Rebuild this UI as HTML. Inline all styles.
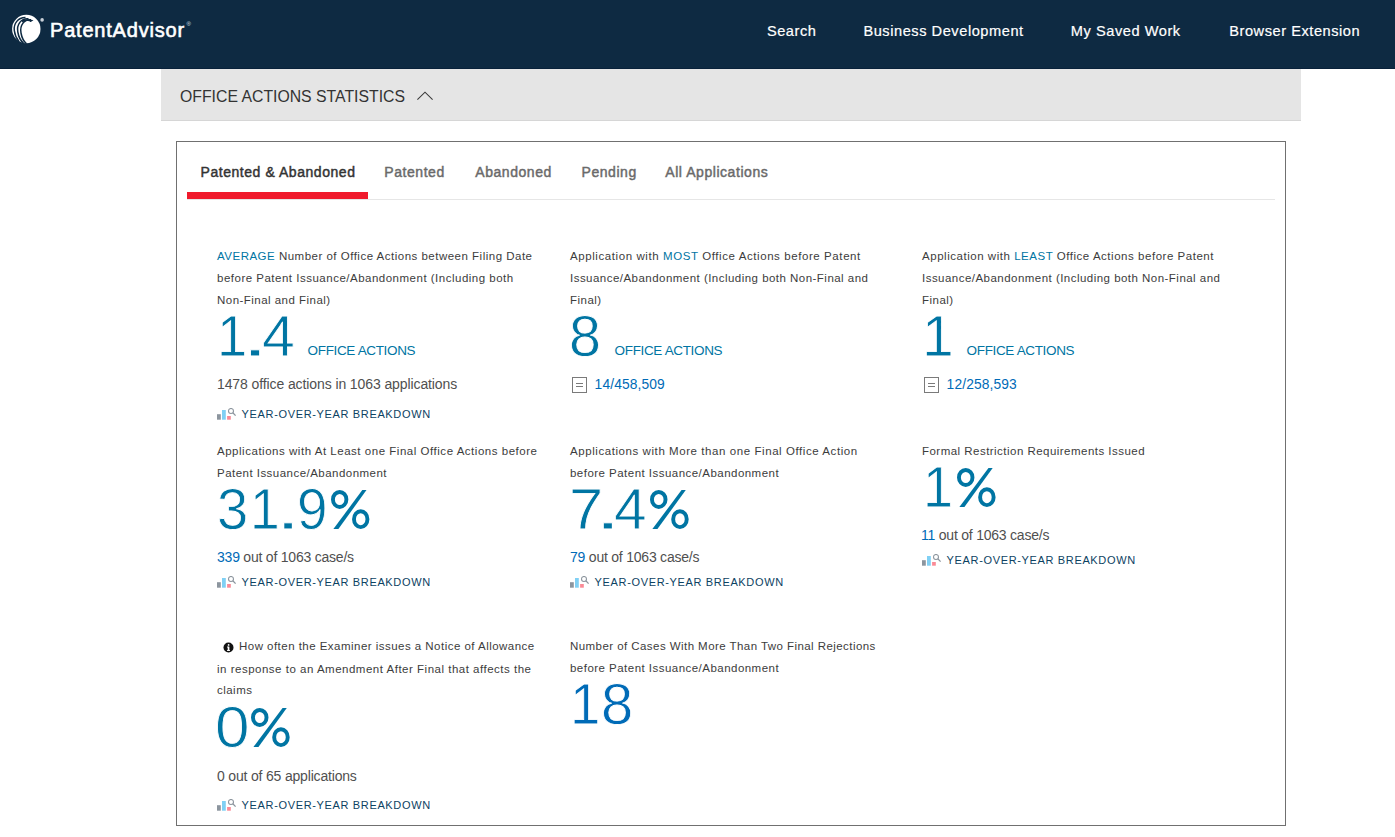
<!DOCTYPE html>
<html><head><meta charset="utf-8"><style>
html,body{margin:0;padding:0;}
body{width:1395px;height:837px;overflow:hidden;background:#fff;position:relative;font-family:"Liberation Sans",sans-serif;}
.t{position:absolute;white-space:nowrap;}
</style></head><body>
<div style="position:absolute;left:0;top:0;width:1395px;height:68px;background:#0e2a42"></div><div style="position:absolute;left:0;top:68px;width:1395px;height:1px;background:#08213a"></div><svg style="position:absolute;left:0;top:0" width="60" height="60" viewBox="0 0 60 60">
<circle cx="26.3" cy="29" r="14.2" fill="#fff"/>
<g fill="none" stroke="#0e2a42" stroke-width="1.5">
<path d="M31 19.8 C 24.5 19, 19.5 25, 21 33 C 21.8 37.5, 23.8 41.5, 26.5 43.8"/>
<path d="M28.5 18.8 C 21 18.2, 16.5 24.5, 17.8 32 C 18.6 37, 21 41, 23.5 43.3"/>
<path d="M25.5 17.6 C 18 17.5, 13.5 23.5, 14.3 30.5 C 14.8 35, 16.5 38.5, 19 41.8"/>
</g>
<path d="M21.5 20.5 C 25 18.8, 29 18.8, 33.5 20.2 L 31.5 21.5 C 28 20.6, 25 20.8, 22.5 22.5 Z" fill="#0e2a42"/>
<circle cx="30.5" cy="21.3" r="0.8" fill="#0e2a42"/>
<circle cx="42.1" cy="19.9" r="1.8" fill="#c9d0d8"/>
</svg><div class="t" style="left:50px;top:18.87px;font-size:20px;line-height:23px;color:#fff;font-weight:normal;letter-spacing:0.8px;-webkit-text-stroke:0.6px #fff;">PatentAdvisor</div>
<div class="t" style="left:186.5px;top:20.92px;font-size:6px;line-height:7px;color:#dfe3e8;font-weight:normal;letter-spacing:0px;">&reg;</div>
<div class="t" style="left:766.9px;top:22.94px;font-size:14.6px;line-height:17px;color:#fff;font-weight:normal;letter-spacing:0.55px;-webkit-text-stroke:0.2px #fff;">Search</div>
<div class="t" style="left:863.4px;top:22.94px;font-size:14.6px;line-height:17px;color:#fff;font-weight:normal;letter-spacing:0.55px;-webkit-text-stroke:0.2px #fff;">Business Development</div>
<div class="t" style="left:1070.8000000000002px;top:22.94px;font-size:14.6px;line-height:17px;color:#fff;font-weight:normal;letter-spacing:0.55px;-webkit-text-stroke:0.2px #fff;">My Saved Work</div>
<div class="t" style="left:1229.2px;top:22.94px;font-size:14.6px;line-height:17px;color:#fff;font-weight:normal;letter-spacing:0.55px;-webkit-text-stroke:0.2px #fff;">Browser Extension</div>
<div style="position:absolute;left:161px;top:69px;width:1140px;height:51px;background:#e5e5e5;border-bottom:1px solid #d6d6d6"></div><div class="t" style="left:180px;top:88.33px;font-size:15.8px;line-height:18px;color:#333;font-weight:normal;letter-spacing:0px;">OFFICE ACTIONS STATISTICS</div>
<svg style="position:absolute;left:415px;top:88px" width="20" height="16" viewBox="0 0 20 16"><path d="M2.4 11.6 L10 4.2 L17.6 11.6" fill="none" stroke="#3a3a3a" stroke-width="1.1"/></svg><div style="position:absolute;left:176px;top:141px;width:1108px;height:683px;border:1px solid #707070"></div><div class="t" style="left:200.5px;top:164.15px;font-size:14px;line-height:16px;color:#333;font-weight:normal;letter-spacing:0.55px;-webkit-text-stroke:0.45px #333;">Patented &amp; Abandoned</div>
<div class="t" style="left:384.3px;top:164.15px;font-size:14px;line-height:16px;color:#6a6a6a;font-weight:normal;letter-spacing:0.55px;-webkit-text-stroke:0.45px #6a6a6a;">Patented</div>
<div class="t" style="left:475.3px;top:164.15px;font-size:14px;line-height:16px;color:#6a6a6a;font-weight:normal;letter-spacing:0.55px;-webkit-text-stroke:0.45px #6a6a6a;">Abandoned</div>
<div class="t" style="left:581.5px;top:164.15px;font-size:14px;line-height:16px;color:#6a6a6a;font-weight:normal;letter-spacing:0.55px;-webkit-text-stroke:0.45px #6a6a6a;">Pending</div>
<div class="t" style="left:665.3000000000001px;top:164.15px;font-size:14px;line-height:16px;color:#6a6a6a;font-weight:normal;letter-spacing:0.55px;-webkit-text-stroke:0.45px #6a6a6a;">All Applications</div>
<div style="position:absolute;left:187px;top:199px;width:1088px;height:1px;background:#e6e6e6"></div><div style="position:absolute;left:187px;top:192px;width:181px;height:7px;background:#f01a2c"></div><div class="t" style="left:217px;top:249.52px;font-size:11.5px;line-height:13px;color:#3c3c3c;font-weight:normal;letter-spacing:0.495px;"><span style="color:#0075a3">AVERAGE</span> Number of Office Actions between Filing Date</div>
<div class="t" style="left:217px;top:271.52px;font-size:11.5px;line-height:13px;color:#3c3c3c;font-weight:normal;letter-spacing:0.5px;">before Patent Issuance/Abandonment (Including both</div>
<div class="t" style="left:217px;top:293.52px;font-size:11.5px;line-height:13px;color:#3c3c3c;font-weight:normal;letter-spacing:0.47px;">Non-Final and Final)</div>
<div class="t" style="left:570px;top:249.52px;font-size:11.5px;line-height:13px;color:#3c3c3c;font-weight:normal;letter-spacing:0.584px;">Application with <span style="color:#0075a3">MOST</span> Office Actions before Patent</div>
<div class="t" style="left:570px;top:271.52px;font-size:11.5px;line-height:13px;color:#3c3c3c;font-weight:normal;letter-spacing:0.47px;">Issuance/Abandonment (Including both Non-Final and</div>
<div class="t" style="left:570px;top:293.52px;font-size:11.5px;line-height:13px;color:#3c3c3c;font-weight:normal;letter-spacing:0.47px;">Final)</div>
<div class="t" style="left:922px;top:249.52px;font-size:11.5px;line-height:13px;color:#3c3c3c;font-weight:normal;letter-spacing:0.532px;">Application with <span style="color:#0075a3">LEAST</span> Office Actions before Patent</div>
<div class="t" style="left:922px;top:271.52px;font-size:11.5px;line-height:13px;color:#3c3c3c;font-weight:normal;letter-spacing:0.47px;">Issuance/Abandonment (Including both Non-Final and</div>
<div class="t" style="left:922px;top:293.52px;font-size:11.5px;line-height:13px;color:#3c3c3c;font-weight:normal;letter-spacing:0.47px;">Final)</div>
<div class="t" style="left:307.6px;top:343.12px;font-size:13.5px;line-height:16px;color:#0075a3;font-weight:normal;letter-spacing:-0.35px;">OFFICE ACTIONS</div>
<div class="t" style="left:217px;top:375.55px;font-size:14px;line-height:16px;color:#505050;font-weight:normal;letter-spacing:-0.1px;">1478 office actions in 1063 applications</div>
<svg style="position:absolute;left:217px;top:408.0px" width="20" height="14" viewBox="0 0 20 14">
<rect x="0" y="6.2" width="3.8" height="5.5" fill="#8c959e"/><rect x="5" y="2" width="3.8" height="9.7" fill="#80d0f4"/><rect x="10.1" y="8" width="3.7" height="3.7" fill="#fa8a96"/>
<circle cx="14" cy="3" r="2.5" fill="none" stroke="#8c959e" stroke-width="1.1"/><path d="M15.8 4.8 L18.6 7.6" stroke="#8c959e" stroke-width="1.3"/>
</svg><div class="t" style="left:241.6px;top:408.19px;font-size:11px;line-height:13px;color:#0d4262;font-weight:normal;letter-spacing:0.65px;">YEAR-OVER-YEAR BREAKDOWN</div>
<div class="t" style="left:614.6px;top:343.12px;font-size:13.5px;line-height:16px;color:#0075a3;font-weight:normal;letter-spacing:-0.35px;">OFFICE ACTIONS</div>
<div style="position:absolute;left:572px;top:377.4px;width:15px;height:16px;border:1px solid #7a7a7a;box-sizing:border-box"><div style="position:absolute;left:3px;top:5px;width:7px;height:1px;background:#7a7a7a"></div><div style="position:absolute;left:3px;top:8px;width:7px;height:1px;background:#7a7a7a"></div></div><div class="t" style="left:594.6px;top:376.62px;font-size:13.8px;line-height:16px;color:#006bb7;font-weight:normal;letter-spacing:0.12px;">14/458,509</div>
<div class="t" style="left:966.6px;top:343.12px;font-size:13.5px;line-height:16px;color:#0075a3;font-weight:normal;letter-spacing:-0.35px;">OFFICE ACTIONS</div>
<div style="position:absolute;left:924px;top:377.4px;width:15px;height:16px;border:1px solid #7a7a7a;box-sizing:border-box"><div style="position:absolute;left:3px;top:5px;width:7px;height:1px;background:#7a7a7a"></div><div style="position:absolute;left:3px;top:8px;width:7px;height:1px;background:#7a7a7a"></div></div><div class="t" style="left:946.6px;top:376.62px;font-size:13.8px;line-height:16px;color:#006bb7;font-weight:normal;letter-spacing:0.12px;">12/258,593</div>
<div class="t" style="left:217px;top:444.52px;font-size:11.5px;line-height:13px;color:#3c3c3c;font-weight:normal;letter-spacing:0.526px;">Applications with At Least one Final Office Actions before</div>
<div class="t" style="left:217px;top:466.52px;font-size:11.5px;line-height:13px;color:#3c3c3c;font-weight:normal;letter-spacing:0.47px;">Patent Issuance/Abandonment</div>
<div class="t" style="left:217px;top:549.15px;font-size:14px;line-height:16px;color:#505050;font-weight:normal;letter-spacing:-0.22px;"><span style="color:#006bb7">339</span> out of 1063 case/s</div>
<svg style="position:absolute;left:217px;top:575.5px" width="20" height="14" viewBox="0 0 20 14">
<rect x="0" y="6.2" width="3.8" height="5.5" fill="#8c959e"/><rect x="5" y="2" width="3.8" height="9.7" fill="#80d0f4"/><rect x="10.1" y="8" width="3.7" height="3.7" fill="#fa8a96"/>
<circle cx="14" cy="3" r="2.5" fill="none" stroke="#8c959e" stroke-width="1.1"/><path d="M15.8 4.8 L18.6 7.6" stroke="#8c959e" stroke-width="1.3"/>
</svg><div class="t" style="left:241.6px;top:575.69px;font-size:11px;line-height:13px;color:#0d4262;font-weight:normal;letter-spacing:0.65px;">YEAR-OVER-YEAR BREAKDOWN</div>
<div class="t" style="left:570px;top:444.52px;font-size:11.5px;line-height:13px;color:#3c3c3c;font-weight:normal;letter-spacing:0.57px;">Applications with More than one Final Office Action</div>
<div class="t" style="left:570px;top:466.52px;font-size:11.5px;line-height:13px;color:#3c3c3c;font-weight:normal;letter-spacing:0.47px;">before Patent Issuance/Abandonment</div>
<div class="t" style="left:570px;top:549.15px;font-size:14px;line-height:16px;color:#505050;font-weight:normal;letter-spacing:-0.22px;"><span style="color:#006bb7">79</span> out of 1063 case/s</div>
<svg style="position:absolute;left:570px;top:575.5px" width="20" height="14" viewBox="0 0 20 14">
<rect x="0" y="6.2" width="3.8" height="5.5" fill="#8c959e"/><rect x="5" y="2" width="3.8" height="9.7" fill="#80d0f4"/><rect x="10.1" y="8" width="3.7" height="3.7" fill="#fa8a96"/>
<circle cx="14" cy="3" r="2.5" fill="none" stroke="#8c959e" stroke-width="1.1"/><path d="M15.8 4.8 L18.6 7.6" stroke="#8c959e" stroke-width="1.3"/>
</svg><div class="t" style="left:594.6px;top:575.69px;font-size:11px;line-height:13px;color:#0d4262;font-weight:normal;letter-spacing:0.65px;">YEAR-OVER-YEAR BREAKDOWN</div>
<div class="t" style="left:922px;top:444.52px;font-size:11.5px;line-height:13px;color:#3c3c3c;font-weight:normal;letter-spacing:0.47px;">Formal Restriction Requirements Issued</div>
<div class="t" style="left:921px;top:527.15px;font-size:14px;line-height:16px;color:#505050;font-weight:normal;letter-spacing:-0.22px;"><span style="color:#006bb7">11</span> out of 1063 case/s</div>
<svg style="position:absolute;left:922px;top:553.5px" width="20" height="14" viewBox="0 0 20 14">
<rect x="0" y="6.2" width="3.8" height="5.5" fill="#8c959e"/><rect x="5" y="2" width="3.8" height="9.7" fill="#80d0f4"/><rect x="10.1" y="8" width="3.7" height="3.7" fill="#fa8a96"/>
<circle cx="14" cy="3" r="2.5" fill="none" stroke="#8c959e" stroke-width="1.1"/><path d="M15.8 4.8 L18.6 7.6" stroke="#8c959e" stroke-width="1.3"/>
</svg><div class="t" style="left:946.6px;top:553.69px;font-size:11px;line-height:13px;color:#0d4262;font-weight:normal;letter-spacing:0.65px;">YEAR-OVER-YEAR BREAKDOWN</div>
<svg style="position:absolute;left:222.5px;top:641.6px" width="11" height="11" viewBox="0 0 11 11"><circle cx="5.5" cy="5.5" r="5" fill="#111"/><rect x="4.7" y="4.6" width="1.7" height="4.2" fill="#fff"/><rect x="4" y="8" width="3" height="0.9" fill="#fff"/><rect x="4" y="4.6" width="1.5" height="0.9" fill="#fff"/><circle cx="5.6" cy="2.9" r="0.9" fill="#fff"/></svg><div class="t" style="left:239px;top:640.02px;font-size:11.5px;line-height:13px;color:#3c3c3c;font-weight:normal;letter-spacing:0.47px;">How often the Examiner issues a Notice of Allowance</div>
<div class="t" style="left:217px;top:663.32px;font-size:11.5px;line-height:13px;color:#3c3c3c;font-weight:normal;letter-spacing:0.506px;">in response to an Amendment After Final that affects the</div>
<div class="t" style="left:217px;top:684.32px;font-size:11.5px;line-height:13px;color:#3c3c3c;font-weight:normal;letter-spacing:0.47px;">claims</div>
<div class="t" style="left:217px;top:768.35px;font-size:14px;line-height:16px;color:#505050;font-weight:normal;letter-spacing:-0.18px;">0 out of 65 applications</div>
<svg style="position:absolute;left:217px;top:798.7px" width="20" height="14" viewBox="0 0 20 14">
<rect x="0" y="6.2" width="3.8" height="5.5" fill="#8c959e"/><rect x="5" y="2" width="3.8" height="9.7" fill="#80d0f4"/><rect x="10.1" y="8" width="3.7" height="3.7" fill="#fa8a96"/>
<circle cx="14" cy="3" r="2.5" fill="none" stroke="#8c959e" stroke-width="1.1"/><path d="M15.8 4.8 L18.6 7.6" stroke="#8c959e" stroke-width="1.3"/>
</svg><div class="t" style="left:241.6px;top:798.89px;font-size:11px;line-height:13px;color:#0d4262;font-weight:normal;letter-spacing:0.65px;">YEAR-OVER-YEAR BREAKDOWN</div>
<div class="t" style="left:570px;top:639.92px;font-size:11.5px;line-height:13px;color:#3c3c3c;font-weight:normal;letter-spacing:0.43999999999999995px;">Number of Cases With More Than Two Final Rejections</div>
<div class="t" style="left:570px;top:661.92px;font-size:11.5px;line-height:13px;color:#3c3c3c;font-weight:normal;letter-spacing:0.47px;">before Patent Issuance/Abandonment</div>
<div class="t" style="left:217.33px;top:296.00px;font-size:57px;line-height:80px;color:#0075a3;-webkit-text-stroke:0.8px #fff;transform:scaleX(0.9542);transform-origin:0 0">1</div>
<div class="t" style="left:241.15px;top:296.00px;font-size:57px;line-height:80px;color:#0075a3;-webkit-text-stroke:0.8px #fff;transform:scaleX(1.7750);transform-origin:0 0">.</div>
<div class="t" style="left:261.63px;top:296.00px;font-size:57px;line-height:80px;color:#0075a3;-webkit-text-stroke:0.8px #fff;transform:scaleX(1.0357);transform-origin:0 0">4</div>
<div class="t" style="left:568.88px;top:296.00px;font-size:57px;line-height:80px;color:#0075a3;-webkit-text-stroke:0.8px #fff;transform:scaleX(1.0077);transform-origin:0 0">8</div>
<div class="t" style="left:921.90px;top:296.00px;font-size:57px;line-height:80px;color:#0075a3;-webkit-text-stroke:0.8px #fff;transform:scaleX(1.0000);transform-origin:0 0">1</div>
<div class="t" style="left:216.75px;top:469.00px;font-size:57px;line-height:80px;color:#0075a3;-webkit-text-stroke:0.8px #fff;transform:scaleX(0.9846);transform-origin:0 0">3</div>
<div class="t" style="left:250.41px;top:469.00px;font-size:57px;line-height:80px;color:#0075a3;-webkit-text-stroke:0.8px #fff;transform:scaleX(0.9375);transform-origin:0 0">1</div>
<div class="t" style="left:275.10px;top:469.00px;font-size:57px;line-height:80px;color:#0075a3;-webkit-text-stroke:0.8px #fff;transform:scaleX(1.6500);transform-origin:0 0">.</div>
<div class="t" style="left:296.72px;top:469.00px;font-size:57px;line-height:80px;color:#0075a3;-webkit-text-stroke:0.8px #fff;transform:scaleX(0.9615);transform-origin:0 0">9</div>
<svg style="position:absolute;overflow:visible;left:330.60px;top:489.90px" width="38.40" height="39.1" viewBox="0 0 38.5 39.05" preserveAspectRatio="none"><ellipse cx="8.7" cy="9.45" rx="6.75" ry="7.5" fill="none" stroke="#0075a3" stroke-width="3.9"/><ellipse cx="29.8" cy="29.15" rx="6.75" ry="7.9" fill="none" stroke="#0075a3" stroke-width="3.9"/><polygon points="31.4,0 35.6,0 7.4,39.05 2.4,39.05" fill="#0075a3"/></svg>
<div class="t" style="left:568.76px;top:469.00px;font-size:57px;line-height:80px;color:#0075a3;-webkit-text-stroke:0.8px #fff;transform:scaleX(1.0800);transform-origin:0 0">7</div>
<div class="t" style="left:593.60px;top:469.00px;font-size:57px;line-height:80px;color:#0075a3;-webkit-text-stroke:0.8px #fff;transform:scaleX(1.7500);transform-origin:0 0">.</div>
<div class="t" style="left:614.24px;top:469.00px;font-size:57px;line-height:80px;color:#0075a3;-webkit-text-stroke:0.8px #fff;transform:scaleX(1.0286);transform-origin:0 0">4</div>
<svg style="position:absolute;overflow:visible;left:649.80px;top:489.90px" width="38.70" height="39.1" viewBox="0 0 38.5 39.05" preserveAspectRatio="none"><ellipse cx="8.7" cy="9.45" rx="6.75" ry="7.5" fill="none" stroke="#0075a3" stroke-width="3.9"/><ellipse cx="29.8" cy="29.15" rx="6.75" ry="7.9" fill="none" stroke="#0075a3" stroke-width="3.9"/><polygon points="31.4,0 35.6,0 7.4,39.05 2.4,39.05" fill="#0075a3"/></svg>
<div class="t" style="left:922.77px;top:447.00px;font-size:57px;line-height:80px;color:#0075a3;-webkit-text-stroke:0.8px #fff;transform:scaleX(0.9458);transform-origin:0 0">1</div>
<svg style="position:absolute;overflow:visible;left:956.70px;top:467.90px" width="38.60" height="39.1" viewBox="0 0 38.5 39.05" preserveAspectRatio="none"><ellipse cx="8.7" cy="9.45" rx="6.75" ry="7.5" fill="none" stroke="#0075a3" stroke-width="3.9"/><ellipse cx="29.8" cy="29.15" rx="6.75" ry="7.9" fill="none" stroke="#0075a3" stroke-width="3.9"/><polygon points="31.4,0 35.6,0 7.4,39.05 2.4,39.05" fill="#0075a3"/></svg>
<div class="t" style="left:214.53px;top:687.00px;font-size:57px;line-height:80px;color:#0075a3;-webkit-text-stroke:0.8px #fff;transform:scaleX(1.0885);transform-origin:0 0">0</div>
<svg style="position:absolute;overflow:visible;left:251.30px;top:707.90px" width="38.70" height="39.1" viewBox="0 0 38.5 39.05" preserveAspectRatio="none"><ellipse cx="8.7" cy="9.45" rx="6.75" ry="7.5" fill="none" stroke="#0075a3" stroke-width="3.9"/><ellipse cx="29.8" cy="29.15" rx="6.75" ry="7.9" fill="none" stroke="#0075a3" stroke-width="3.9"/><polygon points="31.4,0 35.6,0 7.4,39.05 2.4,39.05" fill="#0075a3"/></svg>
<div class="t" style="left:570.21px;top:664.00px;font-size:57px;line-height:80px;color:#006bb7;-webkit-text-stroke:0.8px #fff;transform:scaleX(0.9583);transform-origin:0 0">1</div>
<div class="t" style="left:601.45px;top:664.00px;font-size:57px;line-height:80px;color:#006bb7;-webkit-text-stroke:0.8px #fff;transform:scaleX(1.0154);transform-origin:0 0">8</div>

</body></html>
